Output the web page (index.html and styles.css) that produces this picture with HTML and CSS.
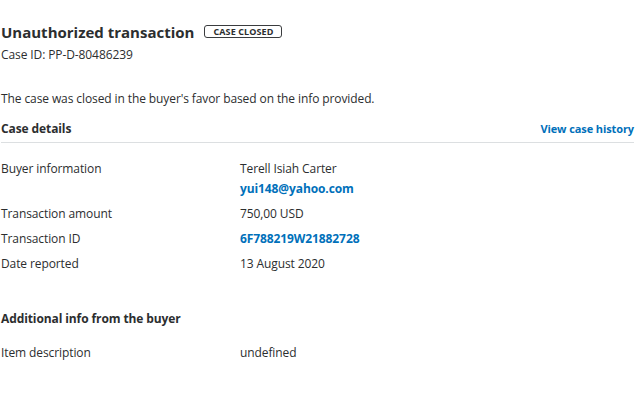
FILE: index.html
```html
<!DOCTYPE html>
<html>
<head>
<meta charset="utf-8">
<link rel="stylesheet" href="styles.css">
</head>
<body>
<main class="page">
  <header class="head">
    <div class="title-row">
      <h1 class="title">Unauthorized transaction</h1>
      <span class="badge">CASE CLOSED</span>
    </div>
    <div class="case-id">Case ID: PP-D-80486239</div>
  </header>
  <p class="summary">The case was closed in the buyer's favor based on the info provided.</p>
  <div class="section-head">
    <h2 class="section-title">Case details</h2>
    <a class="link history" href="#">View case history</a>
  </div>
  <div class="details">
    <div class="row">
      <div class="label">Buyer information</div>
      <div class="value">
        <div>Terell Isiah Carter</div>
        <a class="link email" href="#">yui148@yahoo.com</a>
      </div>
    </div>
    <div class="row">
      <div class="label">Transaction amount</div>
      <div class="value">750,00 USD</div>
    </div>
    <div class="row">
      <div class="label">Transaction ID</div>
      <div class="value"><a class="link" href="#">6F788219W21882728</a></div>
    </div>
    <div class="row">
      <div class="label">Date reported</div>
      <div class="value">13 August 2020</div>
    </div>
  </div>
  <h2 class="section-title extra">Additional info from the buyer</h2>
  <div class="row">
    <div class="label">Item description</div>
    <div class="value">undefined</div>
  </div>
</main>
</body>
</html>
```
FILE: styles.css
```css
html, body {
  margin: 0;
  padding: 0;
  background: #fff;
}
body {
  font-family: "Open Sans", "Noto Sans", sans-serif;
  font-size: 12px;
  letter-spacing: -0.1px;
  color: #2c2e2f;
}
.page {
  width: 633px;
  padding: 20px 0 0 1px;
}
.title-row {
  display: flex;
  align-items: center;
  gap: 10px;
}
.title {
  margin: 0;
  font-size: 15px;
  font-weight: 700;
  line-height: 24px;
  letter-spacing: 0;
}
.badge {
  border: 1px solid #3a3c3e;
  border-radius: 3px;
  font-size: 9px;
  font-weight: 700;
  line-height: 11px;
  padding: 0 8px;
  letter-spacing: 0.1px;
  margin-top: -1px;
}
.case-id {
  margin-top: 3px;
  line-height: 16px;
}
.summary {
  margin: 28px 0 0;
  line-height: 16px;
}
.section-head {
  display: flex;
  justify-content: space-between;
  align-items: center;
  margin-top: 13px;
  padding-bottom: 5px;
  border-bottom: 1px solid #dcdfe1;
}
.section-title {
  margin: 0;
  font-size: 12px;
  font-weight: 700;
  line-height: 16px;
}
.link {
  color: #0070ba;
  font-weight: 700;
  text-decoration: none;
}
.history {
  font-size: 11px;
  line-height: 17px;
}
.details {
  margin-top: 18px;
  display: flex;
  flex-direction: column;
  gap: 9px;
}
.row {
  display: flex;
  line-height: 16px;
}
.label {
  width: 239px;
}
.value {
  display: flex;
  flex-direction: column;
  gap: 4px;
}
.extra {
  margin-top: 39px;
  margin-bottom: 18px;
}
```
